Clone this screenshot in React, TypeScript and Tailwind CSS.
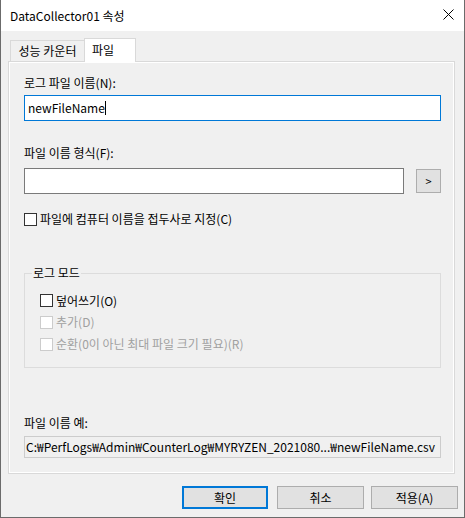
import { JSX } from "react";

const Check = ({ disabled }: { disabled?: boolean }): JSX.Element => (
  <span
    className={
      disabled
        ? "w-[13px] h-[13px] shrink-0 border border-[#cccccc] bg-white"
        : "w-[13px] h-[13px] shrink-0 border border-[#333333] bg-white"
    }
  />
);

const App = (): JSX.Element => {
  return (
    <div className="w-[465px] h-[518px] flex flex-col bg-[#f0f0f0] border-x border-b border-[#6b6b6b] font-['Noto_Sans_CJK_KR',sans-serif] text-[12px] leading-[16px] text-black">
      {/* 제목 표시줄 */}
      <div className="h-[31px] shrink-0 bg-white flex items-center justify-between pl-[9px] pr-[10px]">
        <span>DataCollector01 속성</span>
        <svg width="11" height="11" viewBox="0 0 11 11" className="mb-[2px]">
          <path d="M0.5 0.5L10.5 10.5M10.5 0.5L0.5 10.5" stroke="#000" strokeWidth="1" />
        </svg>
      </div>

      <div className="pl-[7px] pr-[9px] pt-[7px]">
        {/* 탭 */}
        <div className="flex items-end h-[24px] -mb-px relative z-10">
          <div className="ml-[2px] mb-px w-[74px] h-[21px] border-t border-l border-[#d9d9d9] flex items-center justify-center">
            성능 카운터
          </div>
          <div className="w-[52px] h-[24px] border-x border-t border-[#d9d9d9] bg-white pl-[7px] pt-[3px]">
            파일
          </div>
        </div>

        {/* 탭 페이지 */}
        <div className="h-[413px] border border-[#d9d9d9]">
          <div className="h-full border border-white pl-[14px] flex flex-col">
            <div className="mt-[12px]">로그 파일 이름(N):</div>
            <div className="mt-[4px] w-[417px] h-[26px] border border-[#0078d7] bg-white pl-[3px] flex items-center">
              <span>newFileName</span>
              <span className="w-px h-[14px] bg-black" />
            </div>

            <div className="mt-[24px]">파일 이름 형식(F):</div>
            <div className="mt-[7px] flex items-start">
              <div className="w-[380px] h-[26px] border border-[#7a7a7a] bg-white" />
              <div className="ml-[12px] mt-px w-[25px] h-[24px] border border-[#adadad] bg-[#e1e1e1] flex items-center justify-center text-[11px]">
                &gt;
              </div>
            </div>

            <div className="mt-[17px] h-[16px] flex items-center gap-[3px]">
              <Check />
              <span>파일에 컴퓨터 이름을 접두사로 지정(C)</span>
            </div>

            <fieldset className="mt-[38px] w-[417px] border border-[#dcdcdc] pb-[12px]">
              <legend className="ml-[7px] px-px">로그 모드</legend>
              <div className="pl-[15px]">
                <div className="mt-[9px] h-[21px] flex items-center gap-[3px]">
                  <Check />
                  <span>덮어쓰기(O)</span>
                </div>
                <div className="h-[22px] flex items-center gap-[3px] text-[#a0a0a0]">
                  <Check disabled />
                  <span>추가(D)</span>
                </div>
                <div className="h-[22px] flex items-center gap-[3px] text-[#a0a0a0]">
                  <Check disabled />
                  <span>순환(0이 아닌 최대 파일 크기 필요)(R)</span>
                </div>
              </div>
            </fieldset>

            <div className="mt-[47px]">파일 이름 예:</div>
            <div className="mt-[5px] w-[417px] h-[22px] border border-[#cccccc] bg-[#f0f0f0] pl-[1px] flex items-center whitespace-nowrap overflow-hidden">
              C:₩PerfLogs₩Admin₩CounterLog₩MYRYZEN_2021080...₩newFileName.csv
            </div>
          </div>
        </div>
      </div>

      {/* 버튼 */}
      <div className="mt-[12px] pr-[6px] flex justify-end">
        <button className="w-[86px] h-[23px] border-2 border-[#0078d7] bg-[#e1e1e1]">확인</button>
        <button className="ml-[9px] w-[87px] h-[23px] border border-[#adadad] bg-[#e1e1e1]">취소</button>
        <button className="ml-[7px] w-[87px] h-[23px] border border-[#adadad] bg-[#e1e1e1]">적용(A)</button>
      </div>
    </div>
  );
};

export default App;
